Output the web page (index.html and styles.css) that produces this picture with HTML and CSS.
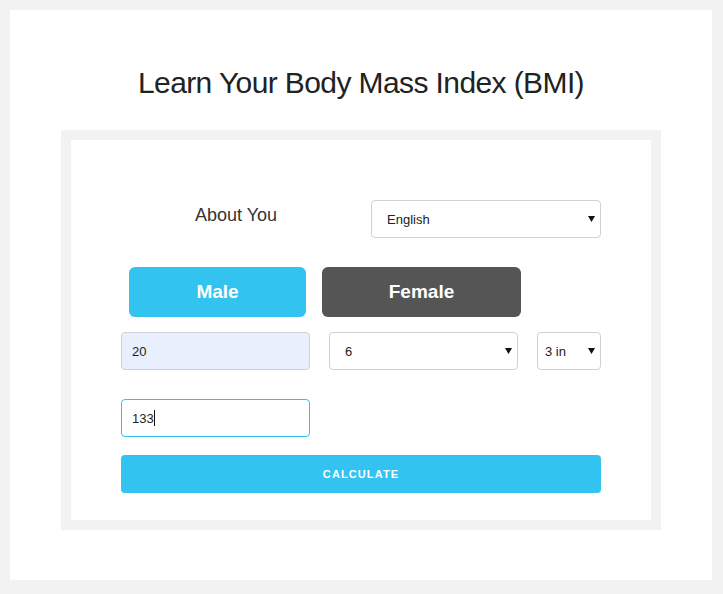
FILE: index.html
```html
<!DOCTYPE html>
<html lang="en">
<head>
<meta charset="utf-8">
<title>BMI</title>
<link rel="stylesheet" href="styles.css">
</head>
<body>
<div class="panel">
  <h1 class="title">Learn Your Body Mass Index (BMI)</h1>
  <div class="card">
    <div class="row row-about">
      <div class="half about">About You</div>
      <div class="half">
        <div class="select-wrap">
          <select class="select select-lang"><option>English</option></select>
          <svg class="arrow" width="7" height="6" viewBox="0 0 7 6"><polygon points="0,0 7,0 3.5,6" fill="#111"/></svg>
        </div>
      </div>
    </div>
    <div class="row row-gender">
      <button class="gender male">Male</button>
      <button class="gender female">Female</button>
    </div>
    <div class="row row-size">
      <input class="field autofill five" type="text" value="20">
      <div class="select-wrap five">
        <select class="select"><option>6</option></select>
        <svg class="arrow" width="7" height="6" viewBox="0 0 7 6"><polygon points="0,0 7,0 3.5,6" fill="#111"/></svg>
      </div>
      <div class="select-wrap two">
        <select class="select select-small"><option>3 in</option></select>
        <svg class="arrow" width="7" height="6" viewBox="0 0 7 6"><polygon points="0,0 7,0 3.5,6" fill="#111"/></svg>
      </div>
    </div>
    <div class="row row-weight">
      <div class="field-wrap five">
        <input class="field focused" type="text" value="133">
        <span class="caret"></span>
      </div>
    </div>
    <button class="calc">Calculate</button>
  </div>
</div>
</body>
</html>
```
FILE: styles.css
```css
html, body {
  margin: 0;
  padding: 0;
}
body {
  background: #f2f2f2;
  padding: 10px 11px 14px 10px;
  font-family: "Liberation Sans", Arial, sans-serif;
  color: #222;
}
.panel {
  background: #fff;
  height: 570px;
  display: flex;
  flex-direction: column;
  align-items: center;
}
.title {
  margin: 55px 0 29px;
  font-size: 30px;
  font-weight: 400;
  line-height: 36px;
  letter-spacing: -0.6px;
  color: #222;
}
.card {
  width: 480px;
  border: 10px solid #f2f2f2;
  padding: 60px 50px 27px;
  box-sizing: content-box;
  height: 293px;
}
.card .row, .card .calc {
  width: 480px;
}
.row {
  display: flex;
}
.half {
  width: 230px;
}
.half + .half {
  margin-left: 20px;
}
.about {
  text-align: center;
  font-size: 18px;
  color: #333;
  padding-top: 5px;
  line-height: normal;
}
.select-wrap {
  position: relative;
  height: 38px;
}
.select {
  appearance: none;
  -webkit-appearance: none;
  width: 100%;
  height: 38px;
  margin: 0;
  border: 1px solid #d1d1d1;
  border-radius: 4px;
  background: #fff;
  font-family: "Liberation Sans", Arial, sans-serif;
  font-size: 13px;
  color: #222;
  padding: 0 20px 0 15px;
  box-sizing: border-box;
  display: block;
}
.select-small {
  padding-left: 7px;
}
.arrow {
  position: absolute;
  right: 6px;
  top: 16px;
  pointer-events: none;
}
.row-gender {
  margin-top: 29px;
  padding-left: 8px;
  box-sizing: border-box;
}
.gender {
  height: 50px;
  border: none;
  border-radius: 6px;
  padding: 0;
  font-family: "Liberation Sans", Arial, sans-serif;
  font-size: 19px;
  font-weight: 700;
  color: #fff;
  margin: 0;
}
.male {
  background: #33c3f0;
  width: 177px;
}
.female {
  background: #555;
  width: 199px;
  margin-left: 16px;
}
.row-size {
  margin-top: 15px;
}
.five {
  width: 189px;
  flex: none;
}
.two {
  width: 64px;
  flex: none;
}
.row-size > * + * {
  margin-left: 19px;
}
.field {
  height: 38px;
  width: 100%;
  box-sizing: border-box;
  border: 1px solid #d1d1d1;
  border-radius: 4px;
  padding: 0 10px;
  margin: 0;
  font-family: "Liberation Sans", Arial, sans-serif;
  font-size: 13px;
  color: #222;
  background: #fff;
  outline: none;
  display: block;
}
.autofill {
  background: #e8f0fe;
  width: 189px;
}
.row-weight {
  margin-top: 29px;
}
.field-wrap {
  position: relative;
}
.focused {
  border-color: #33c3f0;
}
.caret {
  position: absolute;
  left: 33px;
  top: 11px;
  width: 1px;
  height: 16px;
  background: #111;
}
.calc {
  display: block;
  margin-top: 18px;
  height: 38px;
  border: none;
  border-radius: 4px;
  background: #33c3f0;
  color: #fff;
  font-family: "Liberation Sans", Arial, sans-serif;
  font-size: 11px;
  font-weight: 700;
  letter-spacing: 1.1px;
  text-transform: uppercase;
  padding: 0;
}
```
